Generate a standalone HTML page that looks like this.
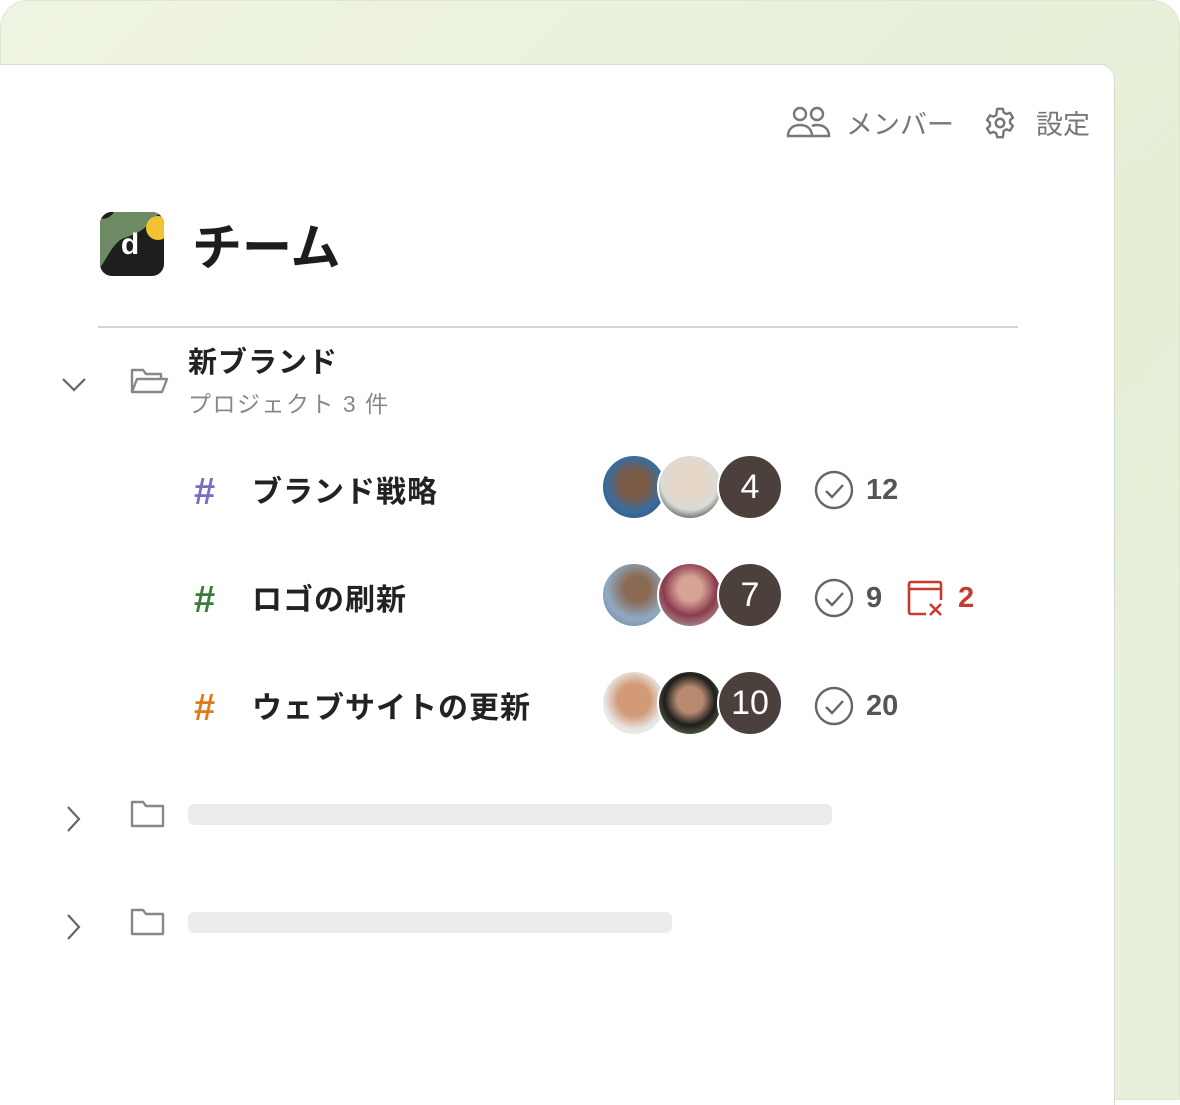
<!DOCTYPE html>
<html><head><meta charset="utf-8"><style>
html,body{margin:0;padding:0;background:#fff;}
body{width:1180px;height:1100px;position:relative;overflow:hidden;font-family:"Liberation Sans","Noto Sans CJK JP",sans-serif;}
.frame{position:absolute;left:0;top:0;width:1180px;height:1100px;border-radius:28px 28px 0 0;background:linear-gradient(135deg,#eef4e2 0%,#e6efd6 60%,#e8f0da 100%);box-shadow:inset 0 0 0 1px #dfe6d2;}
.card{position:absolute;left:0;top:65px;width:1114px;height:1040px;background:#fff;border-radius:0 14px 0 0;box-shadow:0 0 0 1px #d8ddd2;}
.t{position:absolute;white-space:nowrap;}
.av{position:absolute;width:66px;height:66px;border-radius:50%;border:2px solid #fff;box-sizing:border-box;}
.num{color:#fff;font-size:34px;display:flex;align-items:center;justify-content:center;}
.cnt{position:absolute;font-size:29px;color:#555;font-weight:bold;}
.bar{position:absolute;height:21px;border-radius:6px;background:#ececec;}
.h{position:absolute;font-size:38px;font-weight:bold;}
</style></head><body>
<div class="frame"></div>
<div class="card">
<svg style="position:absolute;left:786px;top:40px" width="48" height="34" viewBox="0 0 48 34" fill="none" stroke="#777" stroke-width="2.4"><circle cx="14" cy="9" r="6"/><circle cx="31" cy="9" r="6"/><path d="M2 31c0-7 5-11 12-11s12 4 12 11z"/><path d="M26 21c2-1 3-1 5-1 7 0 12 4 12 11h-16"/></svg>
<div class="t" style="left:846px;top:38px;font-size:27px;color:#777">メンバー</div>
<svg style="position:absolute;left:983px;top:41px" width="34" height="34" viewBox="0 0 24 24" fill="none" stroke="#777" stroke-width="1.7"><circle cx="12" cy="12" r="3"/><path d="M10 2h4l.6 2.6 2 1.1 2.5-.9 2 3.4-2 1.8v2.2l2 1.8-2 3.4-2.5-.9-2 1.1L14 22h-4l-.6-2.6-2-1.1-2.5.9-2-3.4 2-1.8v-2.2l-2-1.8 2-3.4 2.5.9 2-1.1z" stroke-linejoin="round"/></svg>
<div class="t" style="left:1036px;top:38px;font-size:27px;color:#777">設定</div>
<svg style="position:absolute;left:100px;top:147px" width="64" height="64" viewBox="0 0 64 64"><defs><clipPath id="c"><rect width="64" height="64" rx="12"/></clipPath></defs><g clip-path="url(#c)"><rect width="64" height="64" fill="#1e1f1c"/><path d="M0 0h60c-10 14-22 22-36 26C14 30 8 44 0 56z" fill="#6d8a64"/><circle cx="58" cy="16" r="12" fill="#f1c232"/><path d="M0 0h14C10 6 4 8 0 6z" fill="#1e1f1c"/></g><text x="30" y="42" font-family="Liberation Sans" font-weight="bold" font-size="30" fill="#fff" text-anchor="middle">d</text></svg>
<div class="t" style="left:192px;top:143px;font-size:50px;font-weight:bold;color:#1d1d1d">チーム</div>
<div style="position:absolute;left:98px;top:261px;width:920px;height:2px;background:#d4d4d4"></div>
<svg style="position:absolute;left:60px;top:310px" width="30" height="20" viewBox="0 0 30 20" fill="none" stroke="#666" stroke-width="2.2"><path d="M3 4l11 11 11-11"/></svg>
<svg style="position:absolute;left:129px;top:300px" width="40" height="32" viewBox="0 0 40 32" fill="none" stroke="#888" stroke-width="2.4" stroke-linejoin="round"><path d="M3 27V5h11l3 4h15v5"/><path d="M3 27l5-13h30l-5 13z"/></svg>
<div class="t" style="left:188px;top:274px;font-size:29px;font-weight:bold;color:#222;letter-spacing:1px">新ブランド</div>
<div class="t" style="left:188px;top:320px;font-size:23px;color:#888;letter-spacing:1.5px">プロジェクト 3 件</div>
<div class="h" style="left:194px;top:406px;color:#7b6cc8">#</div>
<div class="t" style="left:252px;top:402px;font-size:30px;font-weight:bold;color:#222;letter-spacing:1px">ブランド戦略</div>
<div class="h" style="left:194px;top:514px;color:#3d7a3d">#</div>
<div class="t" style="left:252px;top:510px;font-size:30px;font-weight:bold;color:#222;letter-spacing:1px">ロゴの刷新</div>
<div class="h" style="left:194px;top:622px;color:#e07a1c">#</div>
<div class="t" style="left:252px;top:618px;font-size:30px;font-weight:bold;color:#222;letter-spacing:1px">ウェブサイトの更新</div>

<div class="av" style="left:601px;top:389px;background:radial-gradient(circle at 50% 45%,#7a5b48 0 30%,#3a6d9e 60%,#264b72)"></div>
<div class="av" style="left:657px;top:389px;background:radial-gradient(circle at 50% 40%,#e6d7c7 0 30%,#d9dbd6 60%,#2e2e2e 90%)"></div>
<div class="av num" style="left:717px;top:389px;background:#4b403c">4</div>
<div class="av" style="left:601px;top:497px;background:radial-gradient(circle at 55% 40%,#8a6a55 0 25%,#8faac4 60%,#6f7f87)"></div>
<div class="av" style="left:657px;top:497px;background:radial-gradient(circle at 50% 40%,#d6a394 0 25%,#8b3b4d 55%,#b7c7b8)"></div>
<div class="av num" style="left:717px;top:497px;background:#4b403c">7</div>
<div class="av" style="left:601px;top:605px;background:radial-gradient(circle at 50% 45%,#d39a78 0 35%,#e8e8e6 65%)"></div>
<div class="av" style="left:657px;top:605px;background:radial-gradient(circle at 50% 45%,#b98a70 0 28%,#1d1d1d 55%,#5c6645 80%)"></div>
<div class="av num" style="left:717px;top:605px;background:#4b403c">10</div>

<svg style="position:absolute;left:814px;top:405px" width="40" height="40" viewBox="0 0 40 40" fill="none" stroke="#666" stroke-width="2.4"><circle cx="20" cy="20" r="18"/><path d="M12 21l6 6 11-12"/></svg>
<div class="cnt" style="left:866px;top:409px">12</div>
<svg style="position:absolute;left:814px;top:513px" width="40" height="40" viewBox="0 0 40 40" fill="none" stroke="#666" stroke-width="2.4"><circle cx="20" cy="20" r="18"/><path d="M12 21l6 6 11-12"/></svg>
<div class="cnt" style="left:866px;top:517px">9</div>
<svg style="position:absolute;left:906px;top:513px" width="40" height="40" viewBox="0 0 40 40" fill="none" stroke="#c93a2e" stroke-width="2.6"><path d="M20 36H5a2 2 0 0 1-2-2V6a2 2 0 0 1 2-2h28a2 2 0 0 1 2 2v16"/><path d="M3 11h32"/><path d="M24 26l11 11M35 26L24 37"/></svg>
<div class="cnt" style="left:958px;top:517px;color:#c93a2e">2</div>
<svg style="position:absolute;left:814px;top:621px" width="40" height="40" viewBox="0 0 40 40" fill="none" stroke="#666" stroke-width="2.4"><circle cx="20" cy="20" r="18"/><path d="M12 21l6 6 11-12"/></svg>
<div class="cnt" style="left:866px;top:625px">20</div>

<svg style="position:absolute;left:64px;top:739px" width="20" height="30" viewBox="0 0 20 30" fill="none" stroke="#666" stroke-width="2.2"><path d="M4 3l11 12-11 12"/></svg>
<svg style="position:absolute;left:129px;top:733px" width="38" height="32" viewBox="0 0 38 32" fill="none" stroke="#888" stroke-width="2.4" stroke-linejoin="round"><path d="M3 28V4h11l3 4h17v20z"/></svg>
<div class="bar" style="left:188px;top:739px;width:644px"></div>
<svg style="position:absolute;left:64px;top:847px" width="20" height="30" viewBox="0 0 20 30" fill="none" stroke="#666" stroke-width="2.2"><path d="M4 3l11 12-11 12"/></svg>
<svg style="position:absolute;left:129px;top:841px" width="38" height="32" viewBox="0 0 38 32" fill="none" stroke="#888" stroke-width="2.4" stroke-linejoin="round"><path d="M3 28V4h11l3 4h17v20z"/></svg>
<div class="bar" style="left:188px;top:847px;width:484px"></div>
</div>
</body></html>
